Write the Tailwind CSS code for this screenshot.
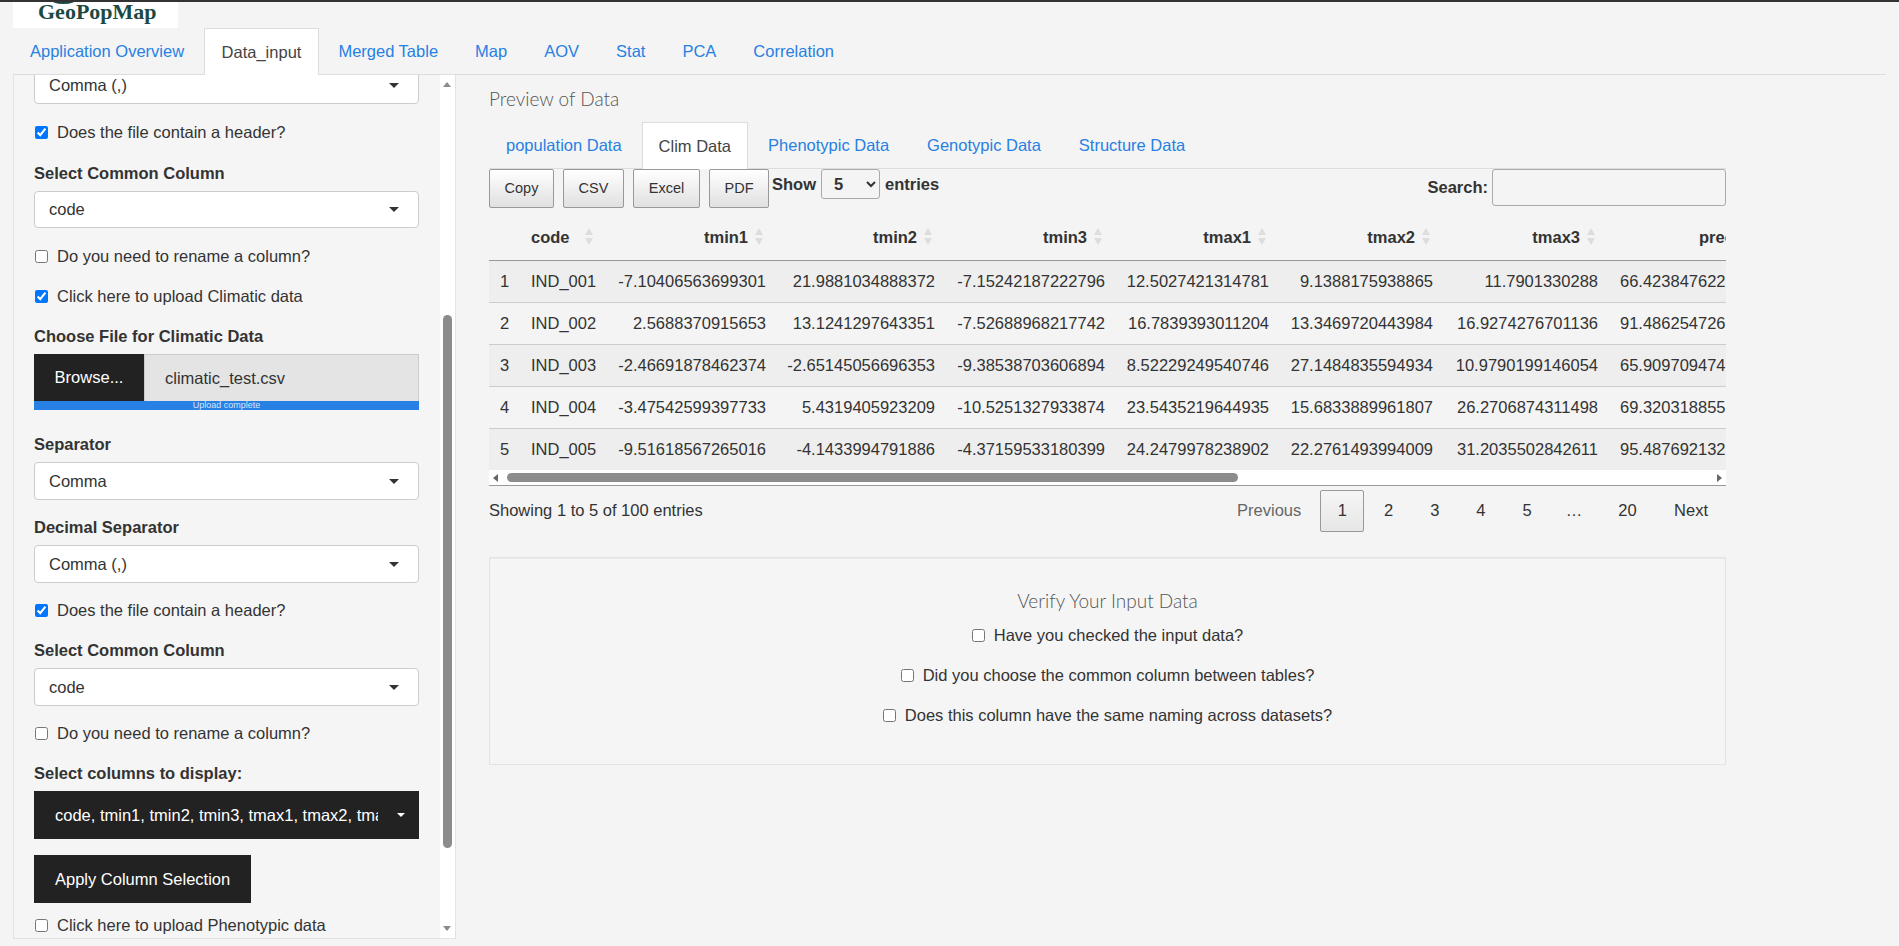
<!DOCTYPE html>
<html lang="en">
<head>
    <meta charset="UTF-8">
    <title>GeoPopMap</title>
    <script src="https://cdn.jsdelivr.net/npm/@tailwindcss/browser@4"></script>
</head>
<body class="bg-[#f4f4f4] text-[#333] text-[16.5px] font-['Liberation_Sans',Arial,sans-serif] h-screen overflow-hidden">
    <div class="h-[2px] bg-[#333]"></div>

    <!-- Logo -->
    <div class="relative ml-[13px] w-[165px] h-[26px] bg-white overflow-hidden">
        <div class="absolute left-[37px] top-[-9px] w-[27px] h-[11px] rounded-[50%] bg-[#1c4a43]"></div>
        <div class="pl-[25px] leading-[20px] text-[22px] font-bold text-[#1c4a43] font-['Liberation_Serif',serif]">GeoPopMap</div>
    </div>

    <!-- Main tabs -->
    <nav class="flex h-[47px] mx-[13px] border-b border-[#ddd] text-[#2780e3]">
        <a class="px-[17px] pt-[11px]">Application Overview</a>
        <a class="ml-[3px] px-[16.5px] pt-[11px] h-[47px] bg-white border border-b-0 border-[#ddd] text-[#444]">Data_input</a>
        <a class="ml-[2px] px-[17.5px] pt-[11px]">Merged Table</a>
        <a class="ml-[2px] px-[17.5px] pt-[11px]">Map</a>
        <a class="ml-[2px] px-[17.5px] pt-[11px]">AOV</a>
        <a class="ml-[2px] px-[17.5px] pt-[11px]">Stat</a>
        <a class="ml-[2px] px-[17.5px] pt-[11px]">PCA</a>
        <a class="ml-[2px] px-[17.5px] pt-[11px]">Correlation</a>
    </nav>

    <div class="flex ml-[13px]">
        <!-- Sidebar, scrolled part way down -->
        <aside class="flex w-[443px] h-[864px] bg-[#f5f5f5] border border-t-0 border-[#e3e3e3]">
            <div class="w-[426px] h-full overflow-hidden pl-[20px] pr-[21px]">
                <div class="flex items-center justify-between -mt-[8px] h-[37px] pl-[14px] pr-[19px] bg-white border border-[#ccc] rounded">Comma (,)<span class="border-x-[5px] border-t-[5px] border-x-transparent border-t-[#333]"></span></div>
                <label class="flex items-center gap-[9px] mt-[18px] h-[20px]"><input type="checkbox" checked class="m-0 ml-[1px]">Does the file contain a header?</label>
                <div class="mt-[21px] h-[20px] leading-[20px] font-bold">Select Common Column</div>
                <div class="flex items-center justify-between mt-[8px] h-[37px] pl-[14px] pr-[19px] bg-white border border-[#ccc] rounded">code<span class="border-x-[5px] border-t-[5px] border-x-transparent border-t-[#333]"></span></div>
                <label class="flex items-center gap-[9px] mt-[18px] h-[20px]"><input type="checkbox" class="m-0 ml-[1px]">Do you need to rename a column?</label>
                <label class="flex items-center gap-[9px] mt-[20px] h-[20px]"><input type="checkbox" checked class="m-0 ml-[1px]">Click here to upload Climatic data</label>
                <div class="mt-[20px] h-[20px] leading-[20px] font-bold">Choose File for Climatic Data</div>
                <div class="flex mt-[8px] h-[47px]">
                    <div class="w-[110px] bg-[#222] text-white flex items-center justify-center">Browse...</div>
                    <div class="flex-1 bg-[#e4e4e4] border border-[#ccc] border-b-0 flex items-center pl-[20px]">climatic_test.csv</div>
                </div>
                <div class="h-[9px] bg-[#2780e3] text-[#d5e6fa] text-[9px] leading-[8px] text-center">Upload complete</div>
                <div class="mt-[24px] h-[20px] leading-[20px] font-bold">Separator</div>
                <div class="flex items-center justify-between mt-[8px] h-[38px] pl-[14px] pr-[19px] bg-white border border-[#ccc] rounded">Comma<span class="border-x-[5px] border-t-[5px] border-x-transparent border-t-[#333]"></span></div>
                <div class="mt-[17px] h-[20px] leading-[20px] font-bold">Decimal Separator</div>
                <div class="flex items-center justify-between mt-[8px] h-[38px] pl-[14px] pr-[19px] bg-white border border-[#ccc] rounded">Comma (,)<span class="border-x-[5px] border-t-[5px] border-x-transparent border-t-[#333]"></span></div>
                <label class="flex items-center gap-[9px] mt-[17px] h-[20px]"><input type="checkbox" checked class="m-0 ml-[1px]">Does the file contain a header?</label>
                <div class="mt-[20px] h-[20px] leading-[20px] font-bold">Select Common Column</div>
                <div class="flex items-center justify-between mt-[8px] h-[38px] pl-[14px] pr-[19px] bg-white border border-[#ccc] rounded">code<span class="border-x-[5px] border-t-[5px] border-x-transparent border-t-[#333]"></span></div>
                <label class="flex items-center gap-[9px] mt-[17px] h-[20px]"><input type="checkbox" class="m-0 ml-[1px]">Do you need to rename a column?</label>
                <div class="mt-[20px] h-[20px] leading-[20px] font-bold">Select columns to display:</div>
                <div class="flex items-center mt-[8px] h-[48px] pl-[21px] bg-[#222] text-white">
                    <span class="w-[323px] overflow-hidden whitespace-nowrap">code, tmin1, tmin2, tmin3, tmax1, tmax2, tmax3</span>
                    <span class="ml-[19px] border-x-[4px] border-t-[4px] border-x-transparent border-t-white"></span>
                </div>
                <div class="flex items-center mt-[16px] w-[217px] h-[48px] pl-[21px] bg-[#222] text-white">Apply Column Selection</div>
                <label class="flex items-center gap-[9px] mt-[12px] h-[20px]"><input type="checkbox" class="m-0 ml-[1px]">Click here to upload Phenotypic data</label>
            </div>
            <!-- Scrollbar -->
            <div class="relative w-[15px] bg-white">
                <span class="absolute left-[3px] top-[7px] border-x-[4px] border-b-[5px] border-x-transparent border-b-[#8c8c8c]"></span>
                <div class="absolute left-[3px] top-[240px] w-[9px] h-[533px] rounded-[5px] bg-[#8c8c8c]"></div>
                <span class="absolute left-[3px] bottom-[7px] border-x-[4px] border-t-[5px] border-x-transparent border-t-[#8c8c8c]"></span>
            </div>
        </aside>

        <!-- Main panel -->
        <main class="ml-[33px] w-[1237px]">
            <h4 class="mt-[12px] h-[24px] leading-[24px] text-[19px] text-[#555] font-light font-['Lato',sans-serif]">Preview of Data</h4>

            <div class="flex mt-[11px] h-[47px] border-b border-[#ddd] text-[#2780e3]">
                <a class="ml-[-1px] px-[18px] pt-[11px]">population Data</a>
                <a class="ml-[2px] px-[16px] pt-[11px] h-[47px] bg-white border border-b-0 border-[#ddd] text-[#444]">Clim Data</a>
                <a class="ml-[2px] px-[18px] pt-[11px]">Phenotypic Data</a>
                <a class="ml-[2px] px-[18px] pt-[11px]">Genotypic Data</a>
                <a class="ml-[2px] px-[18px] pt-[11px]">Structure Data</a>
            </div>

            <!-- DataTable toolbar -->
            <div class="flex h-[46px] items-start">
                <button class="h-[39px] w-[65px] text-[14.5px] text-[#333] border border-[#999] rounded-[2px] bg-gradient-to-b from-white to-[#e0e0e0]">Copy</button>
                <button class="ml-[9px] h-[39px] w-[61px] text-[14.5px] text-[#333] border border-[#999] rounded-[2px] bg-gradient-to-b from-white to-[#e0e0e0]">CSV</button>
                <button class="ml-[9px] h-[39px] w-[67px] text-[14.5px] text-[#333] border border-[#999] rounded-[2px] bg-gradient-to-b from-white to-[#e0e0e0]">Excel</button>
                <button class="ml-[9px] h-[39px] w-[60px] text-[14.5px] text-[#333] border border-[#999] rounded-[2px] bg-gradient-to-b from-white to-[#e0e0e0]">PDF</button>
                <div class="flex items-center ml-[3px] h-[30px] font-bold">
                    Show
                    <select class="ml-[5px] w-[59px] h-[30px] pl-[8px] bg-transparent border border-[#aaa] rounded-[3px] font-bold"><option>5</option></select>
                    <span class="ml-[5px]">entries</span>
                </div>
                <div class="flex items-center ml-auto h-[37px] font-bold">
                    Search:
                    <input class="ml-[4px] w-[234px] h-[37px] border border-[#aaa] rounded-[3px] bg-transparent">
                </div>
            </div>

            <!-- Table, wider than its frame -->
            <div class="w-[1237px] overflow-hidden">
                <table class="table-fixed w-[1282px] border-collapse [&_td]:px-[10px] [&_td]:text-right [&_td]:whitespace-nowrap [&_td:first-child]:!text-left [&_td:first-child]:!pl-[11px] [&_th]:pr-[28px] [&_th]:text-right [&_th]:font-bold [&_th]:whitespace-nowrap">
                    <colgroup>
                        <col class="w-[32px]"><col class="w-[87px]"><col class="w-[168px]"><col class="w-[169px]"><col class="w-[170px]"><col class="w-[164px]"><col class="w-[164px]"><col class="w-[165px]"><col class="w-[163px]">
                    </colgroup>
                    <thead>
                        <tr class="h-[45px] border-b border-[#999]">
                            <th></th>
                            <th class="relative !text-left pl-[10px]">code<span class="absolute left-[64px] top-[13px] border-x-[4px] border-b-[7px] border-x-transparent border-b-[#ddd]"></span><span class="absolute left-[64px] top-[23px] border-x-[4px] border-t-[7px] border-x-transparent border-t-[#ddd]"></span></th>
                            <th class="relative">tmin1<span class="absolute right-[13px] top-[13px] border-x-[4px] border-b-[7px] border-x-transparent border-b-[#ddd]"></span><span class="absolute right-[13px] top-[23px] border-x-[4px] border-t-[7px] border-x-transparent border-t-[#ddd]"></span></th>
                            <th class="relative">tmin2<span class="absolute right-[13px] top-[13px] border-x-[4px] border-b-[7px] border-x-transparent border-b-[#ddd]"></span><span class="absolute right-[13px] top-[23px] border-x-[4px] border-t-[7px] border-x-transparent border-t-[#ddd]"></span></th>
                            <th class="relative">tmin3<span class="absolute right-[13px] top-[13px] border-x-[4px] border-b-[7px] border-x-transparent border-b-[#ddd]"></span><span class="absolute right-[13px] top-[23px] border-x-[4px] border-t-[7px] border-x-transparent border-t-[#ddd]"></span></th>
                            <th class="relative">tmax1<span class="absolute right-[13px] top-[13px] border-x-[4px] border-b-[7px] border-x-transparent border-b-[#ddd]"></span><span class="absolute right-[13px] top-[23px] border-x-[4px] border-t-[7px] border-x-transparent border-t-[#ddd]"></span></th>
                            <th class="relative">tmax2<span class="absolute right-[13px] top-[13px] border-x-[4px] border-b-[7px] border-x-transparent border-b-[#ddd]"></span><span class="absolute right-[13px] top-[23px] border-x-[4px] border-t-[7px] border-x-transparent border-t-[#ddd]"></span></th>
                            <th class="relative">tmax3<span class="absolute right-[13px] top-[13px] border-x-[4px] border-b-[7px] border-x-transparent border-b-[#ddd]"></span><span class="absolute right-[13px] top-[23px] border-x-[4px] border-t-[7px] border-x-transparent border-t-[#ddd]"></span></th>
                            <th>prec1</th>
                        </tr>
                    </thead>
                    <tbody>
                        <tr class="h-[42px] bg-[#eee] border-b border-[#ccc]"><td>1</td><td class="!text-left">IND_001</td><td>-7.10406563699301</td><td>21.9881034888372</td><td>-7.15242187222796</td><td>12.5027421314781</td><td>9.1388175938865</td><td>11.7901330288</td><td class="!text-left !pl-[12px]">66.423847622</td></tr>
                        <tr class="h-[42px] border-b border-[#ccc]"><td>2</td><td class="!text-left">IND_002</td><td>2.5688370915653</td><td>13.1241297643351</td><td>-7.52688968217742</td><td>16.7839393011204</td><td>13.3469720443984</td><td>16.9274276701136</td><td class="!text-left !pl-[12px]">91.486254726</td></tr>
                        <tr class="h-[42px] bg-[#eee] border-b border-[#ccc]"><td>3</td><td class="!text-left">IND_003</td><td>-2.46691878462374</td><td>-2.65145056696353</td><td>-9.38538703606894</td><td>8.52229249540746</td><td>27.1484835594934</td><td>10.9790199146054</td><td class="!text-left !pl-[12px]">65.909709474</td></tr>
                        <tr class="h-[42px] border-b border-[#ccc]"><td>4</td><td class="!text-left">IND_004</td><td>-3.47542599397733</td><td>5.4319405923209</td><td>-10.5251327933874</td><td>23.5435219644935</td><td>15.6833889961807</td><td>26.2706874311498</td><td class="!text-left !pl-[12px]">69.320318855</td></tr>
                        <tr class="h-[42px] bg-[#eee]"><td>5</td><td class="!text-left">IND_005</td><td>-9.51618567265016</td><td>-4.1433994791886</td><td>-4.37159533180399</td><td>24.2479978238902</td><td>22.2761493994009</td><td>31.2035502842611</td><td class="!text-left !pl-[12px]">95.487692132</td></tr>
                    </tbody>
                </table>
            </div>

            <!-- Horizontal scrollbar -->
            <div class="relative h-[16px] bg-white border-b border-[#999]">
                <span class="absolute left-[4px] top-[4px] border-y-[4px] border-r-[5px] border-y-transparent border-r-[#666]"></span>
                <div class="absolute left-[18px] top-[3px] w-[731px] h-[9px] rounded-[5px] bg-[#8c8c8c]"></div>
                <span class="absolute right-[4px] top-[4px] border-y-[4px] border-l-[5px] border-y-transparent border-l-[#666]"></span>
            </div>

            <div class="flex items-start justify-between mt-[4px] h-[42px] leading-[40px]">
                <span>Showing 1 to 5 of 100 entries</span>
                <div class="flex items-start">
                    <a class="px-[17px] text-[#666]">Previous</a>
                    <a class="ml-[2px] h-[42px] leading-[38px] px-[16.5px] border border-[#999] rounded-[2px] bg-gradient-to-b from-[#f6f6f6] to-[#e6e6e6]">1</a>
                    <a class="ml-[2px] px-[17.5px]">2</a>
                    <a class="ml-[2px] px-[17.5px]">3</a>
                    <a class="ml-[2px] px-[17.5px]">4</a>
                    <a class="ml-[2px] px-[17.5px]">5</a>
                    <span class="px-[16.5px]">…</span>
                    <a class="ml-[2px] pl-[17.5px] pr-[18.5px]">20</a>
                    <a class="ml-[2px] pl-[17px] pr-[18px]">Next</a>
                </div>
            </div>

            <!-- Verify box -->
            <section class="flex flex-col items-center mt-[25px] h-[208px] bg-[#f5f5f5] border border-[#e3e3e3] shadow-[inset_0_1px_1px_rgba(0,0,0,0.05)]">
                <h4 class="mt-[31px] h-[24px] leading-[24px] text-[19px] text-[#555] font-light font-['Lato',sans-serif]">Verify Your Input Data</h4>
                <label class="flex items-center gap-[9px] mt-[12px] h-[20px]"><input type="checkbox" class="m-0">Have you checked the input data?</label>
                <label class="flex items-center gap-[9px] mt-[20px] h-[20px]"><input type="checkbox" class="m-0">Did you choose the common column between tables?</label>
                <label class="flex items-center gap-[9px] mt-[20px] h-[20px]"><input type="checkbox" class="m-0">Does this column have the same naming across datasets?</label>
            </section>
        </main>
    </div>
</body>
</html>
